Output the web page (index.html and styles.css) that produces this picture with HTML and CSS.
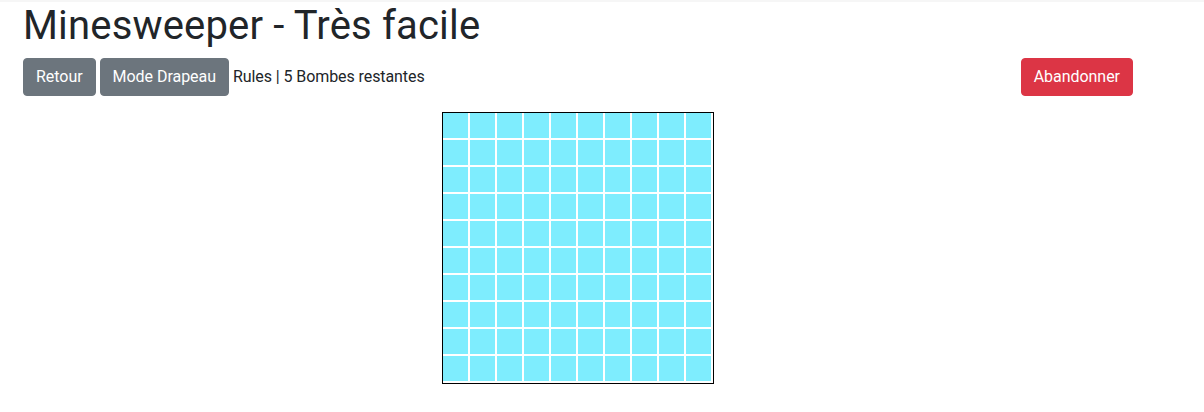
FILE: index.html
```html
<!DOCTYPE html>
<html lang="fr">
<head>
<meta charset="utf-8">
<title>Minesweeper - Très facile</title>
<link rel="stylesheet" href="styles.css">
</head>
<body>
<div class="topline"></div>
<main class="page">
  <h1 class="title">Minesweeper - Très facile</h1>
  <div class="toolbar">
    <div class="toolbar-left">
      <button class="btn btn-secondary">Retour</button>
      <button class="btn btn-secondary">Mode Drapeau</button>
      <span class="info">Rules | 5 Bombes restantes</span>
    </div>
    <button class="btn btn-danger">Abandonner</button>
  </div>
  <div class="board-wrap">
    <div class="board" id="board"></div>
  </div>
</main>
<script src="script.js"></script>
</body>
</html>
```
FILE: styles.css
```css
html, body {
  margin: 0;
  padding: 0;
  background: #ffffff;
}
body {
  font-family: Roboto, "Liberation Sans", sans-serif;
  color: #212529;
  font-size: 16px;
  line-height: 1.5;
}
.topline {
  height: 2px;
  background: #f6f6f6;
}
.page {
  width: 1110px;
  margin-left: 23px;
}
.title {
  margin: 0 0 8px 0;
  font-size: 40px;
  font-weight: 400;
  line-height: 48px;
  letter-spacing: 0.17px;
  color: #212529;
}
.toolbar {
  display: flex;
  justify-content: space-between;
  align-items: center;
}
.toolbar-left {
  display: flex;
  align-items: center;
  gap: 4px;
}
.btn {
  font-family: Roboto, "Liberation Sans", sans-serif;
  font-size: 16px;
  line-height: 24px;
  letter-spacing: -0.04px;
  padding: 6px 12px;
  border: 1px solid transparent;
  border-radius: 4px;
  color: #ffffff;
  cursor: pointer;
}
.btn-secondary {
  background: #6c757d;
  border-color: #6c757d;
}
.btn-danger {
  background: #dc3545;
  border-color: #dc3545;
}
.info {
  font-size: 16px;
  letter-spacing: -0.08px;
}
.board-wrap {
  display: flex;
  justify-content: center;
  margin-top: 16px;
}
.board {
  display: grid;
  grid-template-columns: repeat(10, 25px);
  grid-auto-rows: 25px;
  gap: 2px;
  padding: 0 2px 2px 0;
  border: 1px solid #000000;
  background: #ffffff;
}
.cell {
  background: #7eedfe;
}
```
FILE: script.js
```js
const board = document.getElementById('board');
for (let i = 0; i < 100; i++) {
  const c = document.createElement('div');
  c.className = 'cell';
  board.appendChild(c);
}
```
